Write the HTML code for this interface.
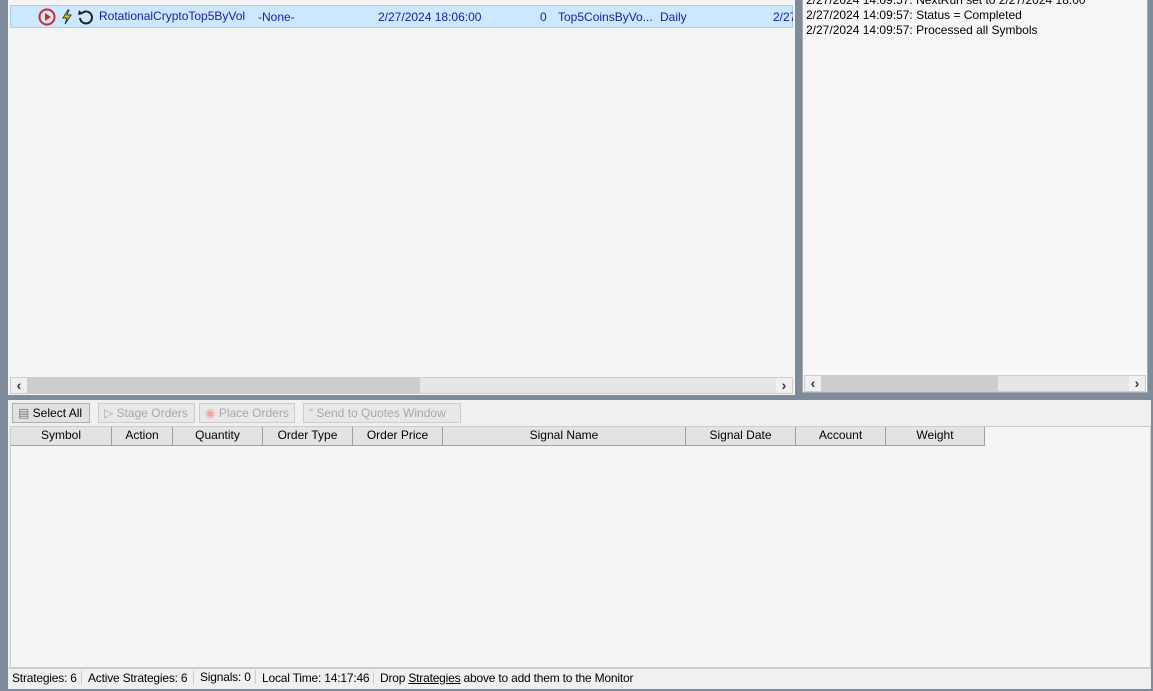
<!DOCTYPE html><html><head><style>
body{margin:0;width:1153px;height:691px;background:#7d8b9b;font-family:"Liberation Sans",sans-serif;font-size:12px;position:relative;overflow:hidden}
.a{position:absolute}
.sb{background:#e6e6e6;border:1px solid #ccc;box-sizing:border-box}
.arr{position:absolute;top:0;width:16px;height:100%;text-align:center;font-size:14px;font-weight:bold;line-height:14px;color:#333;background:#f0f0f0}
.th{position:absolute;top:0;height:18px;border-right:1px solid #a0a0a0;text-align:center;line-height:17px;color:#000}
.btn{position:absolute;top:403px;height:20px;border:1px solid #ccc;background:#e8e8e8;box-sizing:border-box;line-height:18px;color:#a8a8a8;padding-left:5px}
.st{position:absolute;top:671px;line-height:14px;border-right:1px solid #ccc;padding:0 0 0 4px;letter-spacing:-0.2px;white-space:nowrap;box-sizing:border-box}
</style></head><body>
<div class="a" style="left:8px;top:0;width:787px;height:395px;background:#f5f5f5"></div>
<div class="a" style="left:10px;top:5px;width:783px;height:23px;background:#cce8ff;border:1px solid #a8cde8;box-sizing:border-box"></div>
<svg class="a" style="left:38px;top:7px" width="60" height="20">
<circle cx="9" cy="10" r="7.5" fill="none" stroke="#d42828" stroke-width="2"/><path d="M7 6 L13 10 L7 14Z" fill="#d42828"/>
<path d="M30 3 L25 11 L29 11 L27 17 L33 8 L29 8 L31 3Z" fill="#f0c800" stroke="#333" stroke-width="1"/>
<path d="M44 6 A6 6 0 1 1 42 11" fill="none" stroke="#222" stroke-width="2"/><path d="M41 3 L45 7 L40 8Z" fill="#222"/>
</svg>
<div class="a" style="left:99px;top:9px;color:#1a1aa8;width:147px;overflow:hidden;white-space:nowrap">RotationalCryptoTop5ByVolume</div>
<div class="a" style="left:258px;top:10px;color:#1a1aa8">-None-</div>
<div class="a" style="left:378px;top:10px;color:#1a1aa8">2/27/2024 18:06:00</div>
<div class="a" style="left:540px;top:10px;color:#1a1aa8">0</div>
<div class="a" style="left:558px;top:10px;color:#1a1aa8">Top5CoinsByVo...</div>
<div class="a" style="left:660px;top:10px;color:#1a1aa8">Daily</div>
<div class="a" style="left:773px;top:10px;color:#1a1aa8;width:20px;overflow:hidden">2/27</div>
<div class="a sb" style="left:10px;top:377px;width:783px;height:17px"><div class="arr" style="left:0">&lsaquo;</div><div class="a" style="left:16px;top:0;width:393px;height:15px;background:#cdcdcd"></div><div class="arr" style="right:0">&rsaquo;</div></div>
<div class="a" style="left:802px;top:0;width:346px;height:393px;background:#f7f7f7;border:1px solid #aaa;border-top:none;box-sizing:border-box"></div>
<div class="a" style="left:806px;top:-7px;line-height:15px;color:#000">2/27/2024 14:09:57: NextRun set to 2/27/2024 18:00<br>2/27/2024 14:09:57: Status = Completed<br>2/27/2024 14:09:57: Processed all Symbols</div>
<div class="a sb" style="left:804px;top:375px;width:342px;height:17px"><div class="arr" style="left:0">&lsaquo;</div><div class="a" style="left:16px;top:0;width:177px;height:15px;background:#cdcdcd"></div><div class="arr" style="right:0">&rsaquo;</div></div>
<div class="a" style="left:8px;top:400px;width:1143px;height:268px;background:#f0f0f0"></div>
<div class="btn" style="left:12px;width:78px;color:#000;border-color:#adadad;background:#e1e1e1"><span style="color:#777">&#9636;</span> Select All</div>
<div class="btn" style="left:98px;width:97px">&#9655; Stage Orders</div>
<div class="btn" style="left:199px;width:96px"><span style="color:#f0a0a0">&#9673;</span> Place Orders</div>
<div class="btn" style="left:303px;width:158px">&#8220; Send to Quotes Window</div>
<div class="a" style="left:10px;top:426px;width:1141px;height:242px;background:#f5f5f5;border:1px solid #ccc;box-sizing:border-box"></div>
<div class="a" style="left:11px;top:427px;width:974px;height:18px;background:#e3e3e3;border-bottom:1px solid #a0a0a0">
<div class="th" style="left:0;width:100px">Symbol</div><div class="th" style="left:101px;width:60px">Action</div><div class="th" style="left:162px;width:89px">Quantity</div><div class="th" style="left:252px;width:89px">Order Type</div><div class="th" style="left:342px;width:89px">Order Price</div><div class="th" style="left:432px;width:242px">Signal Name</div><div class="th" style="left:675px;width:109px">Signal Date</div><div class="th" style="left:785px;width:89px">Account</div><div class="th" style="left:875px;width:98px">Weight</div></div>
<div class="a" style="left:8px;top:668px;width:1143px;height:20px;background:#f0f0f0;border-top:1px solid #ccc"></div>
<div class="st" style="left:8px;width:74px">Strategies: 6</div><div class="st" style="left:84px;width:110px">Active Strategies: 6</div><div class="st" style="left:196px;top:670px;width:60px">Signals: 0</div><div class="st" style="left:258px;width:116px">Local Time: 14:17:46</div><div class="st" style="left:376px;border:none">Drop <u>Strategies</u> above to add them to the Monitor</div>
</body></html>
